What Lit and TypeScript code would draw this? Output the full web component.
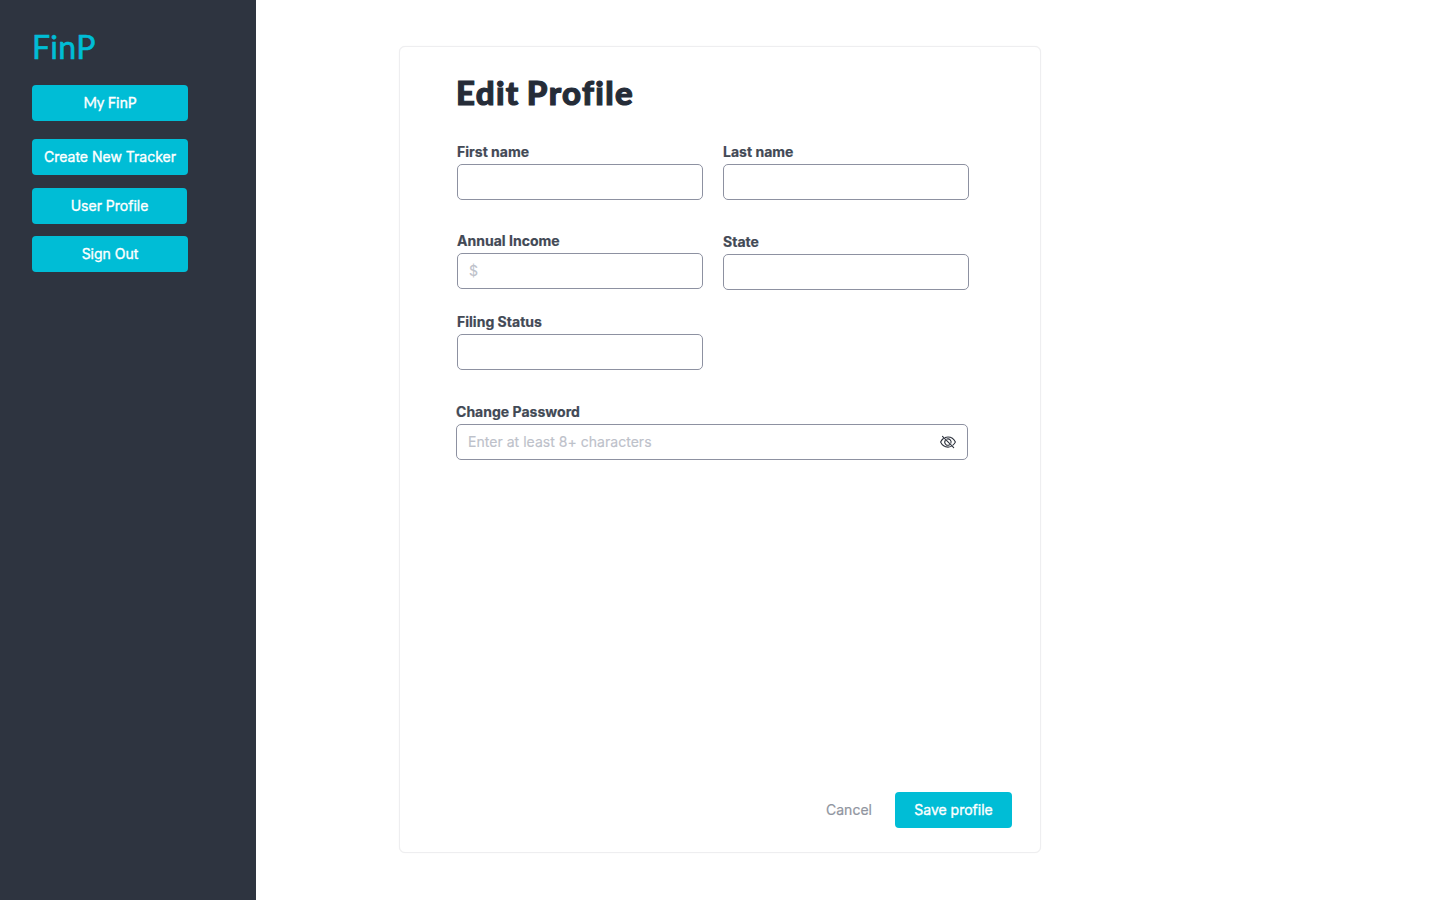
import { LitElement, html, css, svg } from "lit";
import { customElement } from "lit/decorators.js";

const eyeOff = svg`
  <svg class="eye" viewBox="0 0 16 16" fill="none" stroke="#2b303b" stroke-width="1.05" stroke-linecap="round" stroke-linejoin="round">
    <path d="M5.200 3.500C6.100 3.100 7 2.900 8 2.900c3.300 0 6 2.100 7.400 5.100-.6 1.200-1.400 2.300-2.500 3.200"/>
    <path d="M11.200 12.400c-1 .5-2 .7-3.200.7-3.300 0-6-2.100-7.400-5.100.7-1.400 1.600-2.600 2.800-3.500"/>
    <path d="M6.900 5.100A3.100 3.100 0 0 1 10.900 9.100"/>
    <path d="M9.600 10.700A3.100 3.100 0 0 1 5.300 6.400"/>
    <path d="M2.500 2.300L13.700 13.700"/>
  </svg>`;

@customElement("app-root")
export class AppRoot extends LitElement {
  static styles = css`
    :host { display: flex; width: 1440px; height: 900px; overflow: hidden; background: #fff;
      font-family: Inter, "Liberation Sans", sans-serif; font-size: 14px; line-height: 22px; color: #424955; }
    * { box-sizing: border-box; }
    .side { width: 256px; height: 900px; padding: 27px 32px; background: #2e3440; flex: none; }
    .logo { height: 40px; line-height: 40px; font-family: Lato, sans-serif; font-size: 32px; font-weight: 400; color: #00bdd6; margin-bottom: 18px; letter-spacing: 0.3px; -webkit-text-stroke: 0.6px #00bdd6; }
    button { display: block; height: 36px; padding: 0; border: 0; border-radius: 4px; background: #00bdd6; color: #fff;
      font: 400 14px/22px Inter, sans-serif; text-align: center; -webkit-text-stroke: 0.35px currentColor; }
    .side button { width: 156px; }
    .my { margin-bottom: 18px; }
    .side button.my { font-family: Lato, sans-serif; font-size: 14.5px; letter-spacing: 0.1px; }
    .new { margin-bottom: 13px; }
    .side button.user { width: 155px; margin-bottom: 12px; }
    .card { display: flex; flex-direction: column; width: 642px; height: 807px; margin: 46px 0 0 143px; padding: 23px 28px 24px 56px;
      border: 1px solid #eeeef0; border-radius: 6px; background: #fff; box-shadow: 0 0 1px rgba(23, 26, 31, 0.08); }
    h1 { margin: 0 0 23px; height: 48px; font: 900 33px/44px Lato, sans-serif; color: #252c38; letter-spacing: 1.35px; word-spacing: -2px; -webkit-text-stroke: 1.1px #252c38; }
    .grid { display: grid; grid-template-columns: 246px 246px; column-gap: 20px; padding-left: 1px; align-items: start; }
    .field { height: 59px; }
    .label { height: 22px; margin-bottom: 1px; font-weight: 700; letter-spacing: 0.02px; white-space: nowrap; -webkit-text-stroke: 0.2px #424955; }
    .input { display: flex; align-items: center; justify-content: space-between; height: 36px; padding: 0 11px;
      border: 1px solid #8d91a1; border-radius: 5px; background: #fff; color: #bdc1ca; -webkit-text-stroke: 0.15px #bdc1ca; letter-spacing: 0.03px; }
    .income { margin-top: 30px; }
    .state { margin-top: 31px; }
    .filing { margin-top: 21px; }
    .password { width: 512px; margin-top: 31px; }
    .eye { width: 16px; height: 16px; }
    .actions { display: flex; justify-content: flex-end; align-items: center; margin-top: auto; }
    .actions .cancel { width: 92px; background: none; color: #9095a0; -webkit-text-stroke-width: 0.2px; }
    .actions .save { width: 117px; }
  `;

  render() {
    return html`
      <nav class="side">
        <div class="logo">FinP</div>
        <button class="my">My FinP</button>
        <button class="new">Create New Tracker</button>
        <button class="user">User Profile</button>
        <button>Sign Out</button>
      </nav>
      <main class="card">
        <h1>Edit Profile</h1>
        <div class="grid">
          <div class="field"><div class="label">First name</div><div class="input"></div></div>
          <div class="field"><div class="label">Last name</div><div class="input"></div></div>
          <div class="field income"><div class="label">Annual Income</div><div class="input"><span>$</span></div></div>
          <div class="field state"><div class="label">State</div><div class="input"></div></div>
          <div class="field filing"><div class="label">Filing Status</div><div class="input"></div></div>
        </div>
        <div class="field password">
          <div class="label">Change Password</div>
          <div class="input"><span>Enter at least 8+ characters</span>${eyeOff}</div>
        </div>
        <div class="actions">
          <button class="cancel">Cancel</button>
          <button class="save">Save profile</button>
        </div>
      </main>`;
  }
}
